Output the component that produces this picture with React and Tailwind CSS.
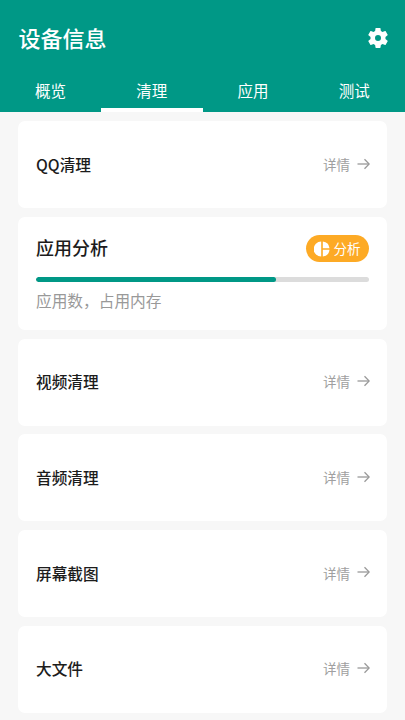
import React from 'react';

const font = 'font-["Noto_Sans_CJK_SC","Noto_Sans",sans-serif]';

const tabs = ['概览', '清理', '应用', '测试'];

const GearIcon = () => (
    <svg width="24" height="24" viewBox="0 0 24 24" fill="#fff">
        <path d="M19.43 12.98c.04-.32.07-.64.07-.98s-.03-.66-.07-.98l2.11-1.65c.19-.15.24-.42.12-.64l-2-3.46c-.12-.22-.39-.3-.61-.22l-2.49 1c-.52-.4-1.08-.73-1.69-.98l-.38-2.65C14.46 2.18 14.25 2 14 2h-4c-.25 0-.46.18-.49.42l-.38 2.65c-.61.25-1.17.59-1.69.98l-2.49-1c-.23-.09-.49 0-.61.22l-2 3.46c-.13.22-.07.49.12.64l2.11 1.65c-.04.32-.07.65-.07.98s.03.66.07.98l-2.11 1.65c-.19.15-.24.42-.12.64l2 3.46c.12.22.39.3.61.22l2.49-1c.52.4 1.08.73 1.69.98l.38 2.65c.03.24.24.42.49.42h4c.25 0 .46-.18.49-.42l.38-2.65c.61-.25 1.17-.59 1.69-.98l2.49 1c.23.09.49 0 .61-.22l2-3.46c.12-.22.07-.49-.12-.64l-2.11-1.65zM12 15a3 3 0 1 1 0-6 3 3 0 1 1 0 6z" />
    </svg>
);

const PieIcon = () => (
    <svg width="16" height="16" viewBox="0 0 16 16" fill="#fff">
        <path d="M7.2 0.5v15A7.5 7.5 0 0 1 7.2 0.5z" />
        <path d="M8.8 0.5A7.5 7.5 0 0 1 15.5 7.2H8.8z" />
        <path d="M8.8 8.8h6.7A7.5 7.5 0 0 1 8.8 15.5z" />
    </svg>
);

const ArrowIcon = () => (
    <svg width="13" height="12" viewBox="0 0 13 12" fill="none" stroke="#999999" strokeWidth="1.3">
        <path d="M0.5 6H12" />
        <path d="M7.5 1.2 12.2 6 7.5 10.8" />
    </svg>
);

const CleanRow = ({ title }) => (
    <div className="flex h-[87px] items-center justify-between rounded-[7px] bg-white pb-[2px] pl-[18px] pr-[17px]">
        <span className="pt-[2px] text-[15.7px] font-medium leading-none text-[#1c1c1c]">{title}</span>
        <div className="flex items-center gap-[7px] text-[#a0a0a0]">
            <span className="pt-[2px] text-[13.5px] leading-none">详情</span>
            <ArrowIcon />
        </div>
    </div>
);

const App = () => {
    return (
        <div className={`flex h-[720px] w-[405px] flex-col overflow-hidden bg-[#f7f7f7] ${font}`}>
            <header className="flex h-[112px] shrink-0 flex-col bg-[#009886] text-white">
                <div className="flex h-[74px] items-center justify-between pl-[18.5px] pr-[15px] pt-[2px]">
                    <h1 className="pb-[2px] text-[22px] font-medium leading-none">设备信息</h1>
                    <GearIcon />
                </div>
                <div className="grid flex-1 grid-cols-4">
                    {tabs.map((tab, i) => (
                        <div
                            key={tab}
                            className={`flex items-center justify-center border-b-[4px] pb-[1px] text-[15.5px] leading-none ${i === 1 ? 'border-white' : 'border-transparent'}`}
                        >
                            {tab}
                        </div>
                    ))}
                </div>
            </header>

            <main className="flex flex-col gap-[8.67px] px-[18px] pt-[9.3px]">
                <CleanRow title="QQ清理" />

                <div className="flex h-[113px] flex-col rounded-[7px] bg-white px-[18px] pt-[18px]">
                    <div className="flex h-[28px] items-center justify-between">
                        <span className="pb-[4px] text-[18px] font-medium leading-none text-[#1c1c1c]">应用分析</span>
                        <div className="flex h-[27px] w-[63px] items-center justify-center gap-[4px] pr-[1px] rounded-full bg-[#fdaa25] text-[13.5px] leading-none text-white">
                            <PieIcon />
                            <span>分析</span>
                        </div>
                    </div>
                    <div className="mt-[14px] h-[5px] overflow-hidden rounded-full bg-[#dcdcdc]">
                        <div className="h-full w-[72%] rounded-full bg-[#009886]" />
                    </div>
                    <p className="mt-[8px] text-[15.7px] leading-[22px] text-[#999999]">应用数，占用内存</p>
                </div>

                <CleanRow title="视频清理" />
                <CleanRow title="音频清理" />
                <CleanRow title="屏幕截图" />
                <CleanRow title="大文件" />
            </main>
        </div>
    );
};

export default App;
